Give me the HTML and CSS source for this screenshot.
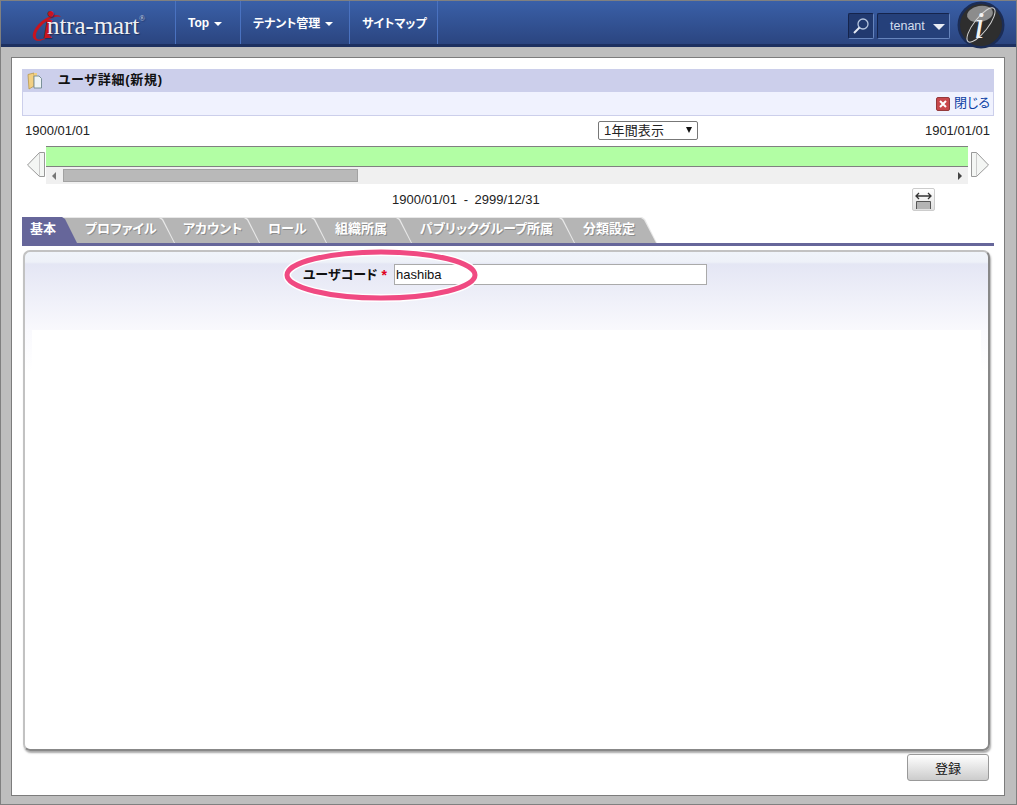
FILE: index.html
```html
<!DOCTYPE html>
<html lang="ja">
<head>
  <meta charset="UTF-8" />
  <title>ユーザ詳細(新規)</title>
  <link rel="stylesheet" href="styles.css">
</head>
<body>
  <header class="topbar">
    <a class="logo">
      <svg class="logo-mark" width="36" height="38" viewBox="0 0 36 38">
        <path fill-rule="evenodd" fill="#c8141e" d="M3 33C-1 28 6 18 14 13C21 8 28 8 30 11C25 9 18 13 12 18C6 24 3 29 6 33C10 35 17 31 24 26C18 32 7 38 3 33Z"/>
        <text class="logo-i" x="12" y="32">i</text>
      </svg>
      <span class="logo-text">ntra-mart</span><sup class="logo-reg">®</sup>
    </a>
    <nav class="nav">
      <a class="nav-item nav-top">Top <i class="caret"></i></a>
      <a class="nav-item nav-tenant">テナント管理 <i class="caret"></i></a>
      <a class="nav-item nav-site">サイトマップ</a>
    </nav>
    <div class="top-right">
      <button class="search-btn">
        <svg width="18" height="18" viewBox="0 0 18 18"><circle cx="11" cy="7" r="5" fill="none" stroke="#b4c4de" stroke-width="1.3"/><path d="M7.5 10.5L2 16" stroke="#e4eaf4" stroke-width="2"/></svg>
      </button>
      <button class="tenant-btn">tenant<i class="caret caret-big"></i></button>
      <svg class="badge" width="48" height="48" viewBox="0 0 48 48">
        <circle cx="24" cy="24" r="23.5" fill="#1b2c55"/>
        <circle cx="24" cy="24" r="21" fill="#2e2e2e"/>
        <ellipse cx="23" cy="13" rx="13" ry="8" transform="rotate(-10 23 13)" fill="#8c8c8c"/>
        <ellipse cx="24" cy="24" rx="21" ry="7" transform="rotate(-52 24 24)" fill="none" stroke="#d4d4d4" stroke-width="1"/>
        <text class="badge-i" x="17" y="37">i</text>
      </svg>
    </div>
  </header>

  <main class="panel">
    <div class="title-bar">
      <svg class="folder" width="16" height="18" viewBox="0 0 16 18">
        <path d="M1 2.5L7 1v13l-5 3z" fill="#f2d083" stroke="#b8974c" stroke-width=".8"/>
        <path d="M7 1h3v3H7z" fill="#f2d083"/>
        <path d="M7 4h5l2.5 2.5V16H7z" fill="#eef4f5" stroke="#6f8890" stroke-width=".9"/>
      </svg>
      <h1>ユーザ詳細(新規)</h1>
    </div>
    <div class="sub-bar">
      <a class="close-link">
        <svg width="14" height="14" viewBox="0 0 14 14"><rect x=".5" y=".5" width="13" height="13" rx="1.5" fill="#c8484c" stroke="#94393b"/><path d="M4 4l6 6M10 4l-6 6" stroke="#fff" stroke-width="2"/></svg>
        <span>閉じる</span>
      </a>
    </div>

    <div class="date-row">
      <span>1900/01/01</span>
      <div class="period-select">1年間表示<i class="select-arrow"></i></div>
      <span>1901/01/01</span>
    </div>

    <div class="timeline">
      <svg class="tl-arrow" width="18" height="25" viewBox="0 0 18 25"><path d="M17.5 .5v24h-5L.5 13 12.5 .5z" fill="#f4f6f4" stroke="#999"/><path d="M12.5 1v23" stroke="#ccc"/></svg>
      <div class="tl-center">
        <div class="tl-bar"></div>
        <div class="tl-scroll">
          <i class="scroll-left"></i>
          <div class="scroll-thumb"></div>
          <i class="scroll-right"></i>
        </div>
      </div>
      <svg class="tl-arrow tl-arrow-right" width="18" height="25" viewBox="0 0 18 25"><path d="M.5 .5v24h5L17.5 13 5.5 .5z" fill="#f4f6f4" stroke="#999"/><path d="M5.5 1v23" stroke="#ccc"/></svg>
    </div>

    <div class="range-row">
      <span class="range-text">1900/01/01 - 2999/12/31</span>
      <button class="fit-btn">
        <svg width="21" height="21" viewBox="0 0 21 21">
          <path d="M3 7h15M6 4L3 7l3 3M15 4l3 3-3 3" fill="none" stroke="#333" stroke-width="1.3"/>
          <path d="M3.5 20v-7.5h14V20" fill="#b4b4b4" stroke="#555"/>
        </svg>
      </button>
    </div>

    <div class="tabs">
      <a class="tab tab-active tab-w1"><span>基本</span></a>
      <a class="tab tab-w2"><span>プロファイル</span></a>
      <a class="tab tab-w3"><span>アカウント</span></a>
      <a class="tab tab-w4"><span>ロール</span></a>
      <a class="tab tab-w5"><span>組織所属</span></a>
      <a class="tab tab-w6"><span>パブリックグループ所属</span></a>
      <a class="tab tab-w7"><span>分類設定</span></a>
    </div>

    <section class="card">
      <div class="field">
        <label for="user-code">ユーザコード</label>
        <span class="required">*</span>
        <input id="user-code" type="text" value="hashiba" />
        <svg class="mark" width="200" height="56" viewBox="0 0 200 56">
          <ellipse cx="98" cy="28" rx="94" ry="23" fill="none" stroke="#fff" stroke-width="8"/>
          <ellipse cx="98" cy="28" rx="94" ry="23" fill="none" stroke="#f04a82" stroke-width="5"/>
        </svg>
      </div>
      <div class="card-body"></div>
    </section>

    <div class="footer-row">
      <button class="submit-btn">登録</button>
    </div>
  </main>
</body>
</html>
```

FILE: styles.css
```css
* {
  box-sizing: border-box;
}
body {
  margin: 0;
  width: 1017px;
  height: 805px;
  overflow: hidden;
  background: #bebebe;
  border: 1px solid #808080;
  font-family: "Liberation Sans", "Noto Sans CJK JP", sans-serif;
  font-size: 13px;
  color: #222;
  font-feature-settings: "palt";
}
button {
  font-family: inherit;
  padding: 0;
  cursor: pointer;
}

/* top bar */
.topbar {
  display: flex;
  height: 46px;
  background: linear-gradient(#3a60a8, #2b4580);
  border-bottom: 3px solid #1d3060;
}
.logo {
  position: relative;
  display: flex;
  align-items: baseline;
  width: 174px;
  padding: 11px 0 0 46px;
  font-family: "Liberation Serif", serif;
  color: #eef0f4;
  text-shadow: 1px 1px 1px #1d2f5c;
}
.logo-mark {
  position: absolute;
  left: 30px;
  top: 5px;
  overflow: visible;
}
.logo-i {
  font-family: "Liberation Serif", serif;
  font-size: 38px;
  font-style: italic;
  font-weight: bold;
  fill: #c8141e;
}
.logo-text {
  position: relative;
  font-size: 25px;
  letter-spacing: -.1px;
}
.logo-reg {
  font-size: 8px;
  line-height: 0;
  align-self: flex-start;
  margin-top: 7px;
  color: #c8d0e0;
}
.nav {
  display: flex;
}
.nav-item {
  display: flex;
  align-items: center;
  gap: 5px;
  height: 43px;
  padding: 0 0 0 12px;
  border-left: 1px solid #4a72c0;
  color: #fff;
  font-size: 12px;
  font-weight: bold;
  white-space: nowrap;
}
.nav-top {
  width: 65px;
}
.nav-tenant {
  width: 109px;
}
.nav-site {
  width: 89px;
  border-right: 1px solid #4a72c0;
}
.caret {
  display: inline-block;
  margin-top: 3px;
  border-left: 4px solid transparent;
  border-right: 4px solid transparent;
  border-top: 4px solid #fff;
}
.caret-big {
  margin: 1px 0 0 8px;
  border-left-width: 6px;
  border-right-width: 6px;
  border-top-width: 6px;
  border-top-color: #e8ecf4;
}
.top-right {
  display: flex;
  align-items: flex-start;
  margin-left: auto;
  padding: 12px 11px 0 0;
}
.search-btn {
  display: flex;
  align-items: center;
  justify-content: center;
  width: 26px;
  height: 26px;
  background: #21396f;
  border: 1px solid #15244c;
  border-bottom-color: #6684bc;
  border-right-color: #6684bc;
  border-radius: 2px;
}
.tenant-btn {
  width: 73px;
  height: 26px;
  margin-left: 3px;
  padding-left: 12px;
  text-align: left;
  background: #25407a;
  border: 1px solid #15244c;
  border-bottom-color: #6684bc;
  border-right-color: #6684bc;
  border-radius: 2px;
  color: #d4deee;
  font-size: 12.5px;
}
.badge {
  margin: -12px 0 0 7px;
}
.badge-i {
  font-family: "Liberation Serif", serif;
  font-size: 38px;
  font-style: italic;
  fill: #f2f2f2;
}

/* main panel */
.panel {
  width: 994px;
  height: 739px;
  margin: 10px 0 0 10px;
  padding: 11px 10px 0;
  background: #fff;
  border: 1px solid #7c7c7c;
}
.title-bar {
  display: flex;
  align-items: center;
  height: 23px;
  background: #cccfeb;
}
.folder {
  margin-left: 5px;
}
.title-bar h1 {
  margin: 0 0 5px 15px;
  font-size: 13px;
  font-weight: bold;
  letter-spacing: .7px;
  color: #111;
}
.sub-bar {
  display: flex;
  justify-content: flex-end;
  height: 24px;
  padding-right: 3px;
  background: #f0f2fe;
  border: 1px solid #cccfeb;
  border-top: 0;
}
.close-link {
  display: flex;
  align-items: center;
  gap: 4px;
  color: #0b3fa4;
  font-size: 13px;
}
.close-link span {
  padding-bottom: 4px;
}
.date-row {
  display: grid;
  grid-template-columns: 573px 100px 1fr;
  align-items: center;
  height: 19px;
  margin-top: 5px;
  padding: 0 4px 0 3px;
}
.date-row span:last-child {
  text-align: right;
}
.period-select {
  position: relative;
  height: 19px;
  padding-left: 5px;
  line-height: 17px;
  background: #fff;
  border: 1px solid #777;
  border-radius: 2px;
  letter-spacing: .2px;
}
.select-arrow {
  position: absolute;
  right: 5px;
  top: 5px;
  border-left: 3.5px solid transparent;
  border-right: 3.5px solid transparent;
  border-top: 6px solid #111;
}
.timeline {
  display: flex;
  margin-top: 6px;
  padding-left: 5px;
  height: 39px;
}
.tl-arrow {
  flex: none;
  margin: 6px 1px 0 0;
}
.tl-arrow-right {
  margin: 6px 0 0 3px;
}
.tl-center {
  width: 922px;
}
.tl-bar {
  height: 21px;
  background: #b2fea4;
  border-top: 1px solid #808080;
  border-bottom: 1px solid #808080;
}
.tl-scroll {
  display: flex;
  align-items: center;
  height: 17px;
  background: #f0f0f0;
}
.scroll-left {
  margin-left: 6px;
  border-top: 4px solid transparent;
  border-bottom: 4px solid transparent;
  border-right: 4px solid #777;
}
.scroll-thumb {
  width: 295px;
  height: 13px;
  margin-left: 7px;
  background: #b9b9b9;
  border: 1px solid #a2a2a2;
}
.scroll-right {
  margin-left: auto;
  margin-right: 6px;
  border-top: 4px solid transparent;
  border-bottom: 4px solid transparent;
  border-left: 4px solid #444;
}
.range-row {
  display: flex;
  align-items: center;
  height: 28px;
  padding-left: 370px;
}
.range-text {
  width: 520px;
  word-spacing: 3px;
}
.fit-btn {
  display: flex;
  align-items: center;
  justify-content: center;
  width: 23px;
  height: 23px;
  background: linear-gradient(#fff, #e0e0e0);
  border: 1px solid #ccc;
  border-radius: 2px;
}

/* tabs */
.tabs {
  display: flex;
  height: 29px;
  margin-top: 4px;
  border-bottom: 3px solid #66669a;
}
.tab {
  position: relative;
  flex: none;
  height: 26px;
  margin-left: -15px;
  background: #e8e8e8;
  clip-path: polygon(0 0, calc(100% - 15px) 0, calc(100% - 12px) 2px, 100% 100%, 0 100%);
}
.tab::before {
  content: "";
  position: absolute;
  inset: 1px 1px 0 0;
  background: #b5b5b5;
  clip-path: polygon(0 0, calc(100% - 15px) 0, calc(100% - 12px) 2px, 100% 100%, 0 100%);
}
.tab span {
  position: relative;
  display: block;
  padding: 1px 0 0 23px;
  color: #fff;
  font-size: 13px;
  font-weight: bold;
  text-shadow: 1px 1px 0 #8c8c8c;
  white-space: nowrap;
}
.tab-active {
  background: #66669a;
}
.tab-active::before {
  background: #66669a;
}
.tab-active span {
  text-shadow: none;
}
.tab-w1 {
  width: 55px;
  margin-left: 0;
  z-index: 7;
}
.tab-w1 span {
  padding-left: 8px;
}
.tab-w2 {
  width: 113px;
  z-index: 6;
}
.tab-w3 {
  width: 100px;
  z-index: 5;
}
.tab-w4 {
  width: 82px;
  z-index: 4;
}
.tab-w5 {
  width: 100px;
  z-index: 3;
}
.tab-w6 {
  width: 178px;
  z-index: 2;
}
.tab-w7 {
  width: 97px;
  z-index: 1;
}

/* form card */
.card {
  width: 967px;
  height: 501px;
  margin: 4px 0 0 1px;
  padding: 12px 7px 0;
  background: linear-gradient(#f0f4fa 0, #eef1f8 10px, #e4e6f4 12px, #f9f9fd 78px, #fff 120px);
  border: 2px solid #c2c2c2;
  border-right-color: #888;
  border-bottom-color: #888;
  border-radius: 7px;
  box-shadow: 1px 2px 2px #a8a8a8;
}
.field {
  position: relative;
  display: flex;
  align-items: center;
  height: 21px;
  margin-left: 271px;
}
.field label {
  padding-bottom: 2px;
  font-size: 13px;
  font-weight: bold;
  color: #111;
}
.required {
  margin-left: 4px;
  color: #e00020;
  font-size: 14px;
  font-weight: bold;
}
.field input {
  width: 313px;
  height: 21px;
  margin-left: 7px;
  padding: 0 1px;
  border: 1px solid #aaa;
  font-family: inherit;
  font-size: 13px;
  color: #111;
}
.mark {
  position: absolute;
  left: -20px;
  top: -17px;
}
.card-body {
  height: 400px;
  margin-top: 45px;
  background: #fff;
}
.footer-row {
  display: flex;
  justify-content: flex-end;
  padding: 3px 5px 0 0;
}
.submit-btn {
  width: 82px;
  height: 27px;
  background: linear-gradient(#fff, #ccc);
  border: 1px solid #999;
  border-radius: 3px;
  font-size: 13px;
  color: #111;
}
```
